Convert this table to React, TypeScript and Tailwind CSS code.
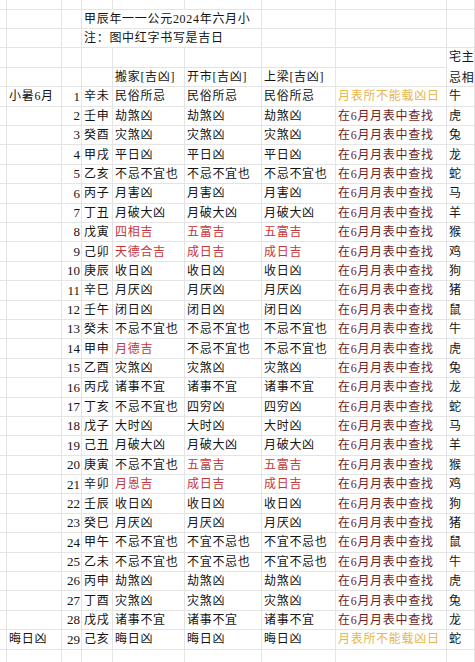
import React from 'react';

// 行数据: 序号, 干支, 搬家, 开市, 上梁, 宅主忌相  (* 开头 = 红字吉日)
const rows: [string, string, string, string, string, string][] = [
    ['1', '辛未', '民俗所忌', '民俗所忌', '民俗所忌', '牛'],
    ['2', '壬申', '劫煞凶', '劫煞凶', '劫煞凶', '虎'],
    ['3', '癸酉', '灾煞凶', '灾煞凶', '灾煞凶', '兔'],
    ['4', '甲戌', '平日凶', '平日凶', '平日凶', '龙'],
    ['5', '乙亥', '不忌不宜也', '不忌不宜也', '不忌不宜也', '蛇'],
    ['6', '丙子', '月害凶', '月害凶', '月害凶', '马'],
    ['7', '丁丑', '月破大凶', '月破大凶', '月破大凶', '羊'],
    ['8', '戊寅', '*四相吉', '*五富吉', '*五富吉', '猴'],
    ['9', '己卯', '*天德合吉', '*成日吉', '*成日吉', '鸡'],
    ['10', '庚辰', '收日凶', '收日凶', '收日凶', '狗'],
    ['11', '辛巳', '月厌凶', '月厌凶', '月厌凶', '猪'],
    ['12', '壬午', '闭日凶', '闭日凶', '闭日凶', '鼠'],
    ['13', '癸未', '不忌不宜也', '不忌不宜也', '不忌不宜也', '牛'],
    ['14', '甲申', '*月德吉', '不忌不宜也', '不忌不宜也', '虎'],
    ['15', '乙酉', '灾煞凶', '灾煞凶', '灾煞凶', '兔'],
    ['16', '丙戌', '诸事不宜', '诸事不宜', '诸事不宜', '龙'],
    ['17', '丁亥', '不忌不宜也', '四穷凶', '四穷凶', '蛇'],
    ['18', '戊子', '大时凶', '大时凶', '大时凶', '马'],
    ['19', '己丑', '月破大凶', '月破大凶', '月破大凶', '羊'],
    ['20', '庚寅', '不忌不宜也', '*五富吉', '*五富吉', '猴'],
    ['21', '辛卯', '*月恩吉', '*成日吉', '*成日吉', '鸡'],
    ['22', '壬辰', '收日凶', '收日凶', '收日凶', '狗'],
    ['23', '癸巳', '月厌凶', '月厌凶', '月厌凶', '猪'],
    ['24', '甲午', '不忌不宜也', '不宜不忌也', '不宜不忌也', '鼠'],
    ['25', '乙未', '不忌不宜也', '不宜不忌也', '不宜不忌也', '牛'],
    ['26', '丙申', '劫煞凶', '劫煞凶', '劫煞凶', '虎'],
    ['27', '丁酉', '灾煞凶', '灾煞凶', '灾煞凶', '兔'],
    ['28', '戊戌', '诸事不宜', '诸事不宜', '诸事不宜', '龙'],
    ['29', '己亥', '晦日凶', '晦日凶', '晦日凶', '蛇'],
];

const Cell: React.FC<{ children?: React.ReactNode; className?: string }> = ({ children, className = '' }) => (
    <div className={`border-r border-b border-[#e4e4e4] overflow-hidden whitespace-nowrap flex items-center px-[2px] ${className}`}>
        {children}
    </div>
);

const txt = (s: string) =>
    s.startsWith('*') ? <span className="text-[#c53638]">{s.slice(1)}</span> : <span>{s}</span>;

const Blank = ({ n }: { n: number }) => (
    <>
        {Array.from({ length: n }).map((_, i) => (
            <Cell key={i} />
        ))}
    </>
);

export default function App() {
    return (
        <div className="w-[475px] h-[662px] overflow-hidden bg-white text-[#141414] font-['Liberation_Serif','Noto_Sans_CJK_SC',serif] text-[12px] tracking-[0.7px]">
            <div className="grid grid-cols-[7px_55px_20px_31px_72px_77px_74px_111px_28px] grid-rows-[9.7px_repeat(33,19.4px)_14px]">
                {/* 顶部残行 */}
                <Blank n={9} />

                {/* 标题 */}
                <Blank n={3} />
                <Cell className="col-span-3 px-[1px]">甲辰年一一公元2024年六月小</Cell>
                <Blank n={3} />

                <Blank n={3} />
                <Cell className="col-span-3 px-[1px]">注：图中红字书写是吉日</Cell>
                <Blank n={3} />

                {/* 空行 + 宅主忌相 */}
                <Blank n={8} />
                <Cell className="row-span-2 flex-col justify-center items-start leading-[21px] pt-[1px]">
                    <span>宅主</span>
                    <span>忌相</span>
                </Cell>

                {/* 表头 */}
                <Blank n={4} />
                <Cell>搬家[吉凶]</Cell>
                <Cell className="px-[1px]">开市[吉凶]</Cell>
                <Cell className="px-[1px]">上梁[吉凶]</Cell>
                <Cell />

                {rows.map(([num, gz, a, b, c, z], i) => {
                    const gold = i === 0 || i === rows.length - 1;
                    return (
                        <React.Fragment key={num}>
                            <Cell />
                            <Cell className="px-[1px]">{i === 0 ? '小暑6月' : i === rows.length - 1 ? '晦日凶' : ''}</Cell>
                            <Cell className="justify-end pr-[1px] text-[13px] tracking-normal">{num}</Cell>
                            <Cell>{gz}</Cell>
                            <Cell>{txt(a)}</Cell>
                            <Cell className="px-[1px]">{txt(b)}</Cell>
                            <Cell className="px-[1px]">{txt(c)}</Cell>
                            <Cell>
                                {gold ? (
                                    <span className="text-[#e8b64a]">月表所不能载凶日</span>
                                ) : (
                                    <span className="text-[#6e1d1d]">在6月月表中查找</span>
                                )}
                            </Cell>
                            <Cell>{z}</Cell>
                        </React.Fragment>
                    );
                })}

                {/* 底部残行 */}
                <Blank n={9} />
            </div>
        </div>
    );
}
